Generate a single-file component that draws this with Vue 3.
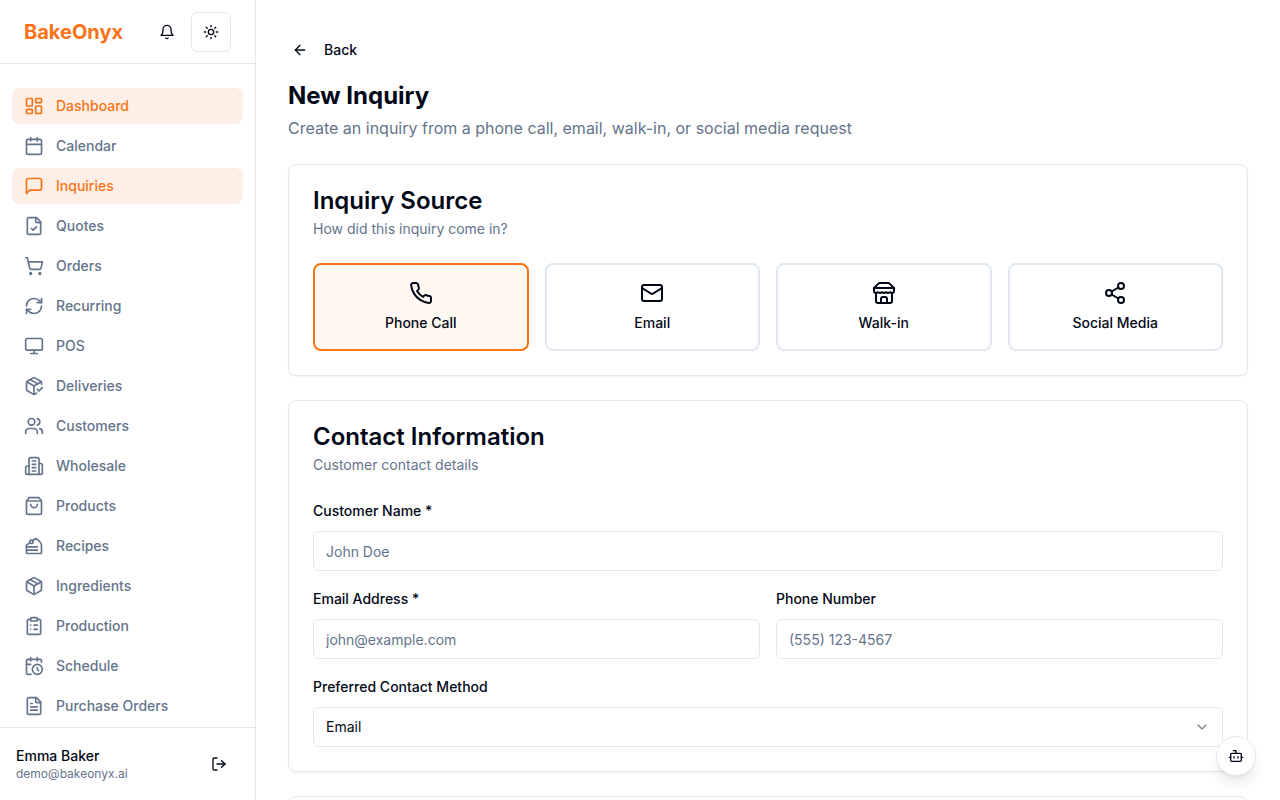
<template>
  <div class="layout">
    <aside class="sidebar">
      <div class="sidebar-header">
        <a href="#" class="logo">BakeOnyx</a>
        <div class="header-actions">
          <button type="button" class="icon-btn" aria-label="Notifications">
            <svg class="icon icon-sm" viewBox="0 0 24 24" v-html="icons.bell"></svg>
          </button>
          <button type="button" class="icon-btn outlined" aria-label="Toggle theme">
            <svg class="icon icon-sm" viewBox="0 0 24 24" v-html="icons.sun"></svg>
          </button>
        </div>
      </div>

      <nav class="nav">
        <a
          v-for="item in navItems"
          :key="item.label"
          href="#"
          class="nav-item"
          :class="{ active: item.active }"
        >
          <svg class="icon icon-md" viewBox="0 0 24 24" v-html="icons[item.icon]"></svg>
          {{ item.label }}
        </a>
      </nav>

      <div class="sidebar-footer">
        <div class="user">
          <p class="user-name">Emma Baker</p>
          <p class="user-email">demo@bakeonyx.ai</p>
        </div>
        <button type="button" class="icon-btn" aria-label="Log out">
          <svg class="icon icon-sm" viewBox="0 0 24 24" v-html="icons.logout"></svg>
        </button>
      </div>
    </aside>

    <main class="main">
      <button type="button" class="back">
        <svg class="icon icon-sm" viewBox="0 0 24 24" v-html="icons.arrowLeft"></svg>
        Back
      </button>

      <header class="page-header">
        <h1>New Inquiry</h1>
        <p>Create an inquiry from a phone call, email, walk-in, or social media request</p>
      </header>

      <form class="cards" @submit.prevent>
        <!-- Source -->
        <section class="card">
          <h2>Inquiry Source</h2>
          <p class="card-desc">How did this inquiry come in?</p>
          <div class="sources" role="radiogroup" aria-label="Inquiry Source">
            <label
              v-for="option in sources"
              :key="option.value"
              class="source"
              :class="{ selected: source === option.value }"
            >
              <input type="radio" name="source" :value="option.value" v-model="source" />
              <svg class="icon icon-lg" viewBox="0 0 24 24" v-html="icons[option.value]"></svg>
              <span>{{ option.label }}</span>
            </label>
          </div>
        </section>

        <!-- Contact -->
        <section class="card">
          <h2>Contact Information</h2>
          <p class="card-desc">Customer contact details</p>
          <div class="fields">
            <div class="field wide">
              <label for="name">Customer Name *</label>
              <input id="name" type="text" v-model="form.name" placeholder="John Doe" />
            </div>
            <div class="field">
              <label for="email">Email Address *</label>
              <input id="email" type="email" v-model="form.email" placeholder="john@example.com" />
            </div>
            <div class="field">
              <label for="phone">Phone Number</label>
              <input id="phone" type="tel" v-model="form.phone" placeholder="(555) 123-4567" />
            </div>
            <div class="field wide">
              <label for="method">Preferred Contact Method</label>
              <div class="select">
                <select id="method" v-model="form.method">
                  <option value="email">Email</option>
                </select>
                <svg class="icon icon-sm chevron" viewBox="0 0 24 24" v-html="icons.chevronDown"></svg>
              </div>
            </div>
          </div>
        </section>

        <section class="card"></section>
      </form>
    </main>

    <button type="button" class="assistant" aria-label="Assistant">
      <svg class="icon icon-sm" viewBox="0 0 24 24" v-html="icons.bot"></svg>
    </button>
  </div>
</template>

<script setup>
import { reactive, ref } from 'vue'

const source = ref('phone')

const form = reactive({
  name: '',
  email: '',
  phone: '',
  method: 'email',
})

const sources = [
  { value: 'phone', label: 'Phone Call' },
  { value: 'mail', label: 'Email' },
  { value: 'store', label: 'Walk-in' },
  { value: 'share', label: 'Social Media' },
]

const navItems = [
  { label: 'Dashboard', icon: 'dashboard', active: true },
  { label: 'Calendar', icon: 'calendar' },
  { label: 'Inquiries', icon: 'message', active: true },
  { label: 'Quotes', icon: 'fileCheck' },
  { label: 'Orders', icon: 'cart' },
  { label: 'Recurring', icon: 'refresh' },
  { label: 'POS', icon: 'monitor' },
  { label: 'Deliveries', icon: 'packageCheck' },
  { label: 'Customers', icon: 'users' },
  { label: 'Wholesale', icon: 'building' },
  { label: 'Products', icon: 'bag' },
  { label: 'Recipes', icon: 'cake' },
  { label: 'Ingredients', icon: 'package' },
  { label: 'Production', icon: 'clipboard' },
  { label: 'Schedule', icon: 'calendarClock' },
  { label: 'Purchase Orders', icon: 'fileText' },
]

// 24x24 stroke icons
const icons = {
  bell: '<path d="M10.3 21a1.94 1.94 0 0 0 3.4 0"/><path d="M6 8a6 6 0 0 1 12 0c0 7 3 9 3 9H3s3-2 3-9"/>',
  sun: '<circle cx="12" cy="12" r="4"/><path d="M12 2v2M12 20v2M4.93 4.93l1.41 1.41M17.66 17.66l1.41 1.41M2 12h2M20 12h2M6.34 17.66l-1.41 1.41M19.07 4.93l-1.41 1.41"/>',
  logout: '<path d="M9 21H5a2 2 0 0 1-2-2V5a2 2 0 0 1 2-2h4"/><path d="m16 17 5-5-5-5"/><path d="M21 12H9"/>',
  arrowLeft: '<path d="m12 19-7-7 7-7"/><path d="M19 12H5"/>',
  chevronDown: '<path d="m6 9 6 6 6-6"/>',
  bot: '<path d="M12 8V4H8"/><rect width="16" height="12" x="4" y="8" rx="2"/><path d="M2 14h2M20 14h2M15 13v2M9 13v2"/>',
  phone: '<path d="M22 16.92v3a2 2 0 0 1-2.18 2 19.79 19.79 0 0 1-8.63-3.07 19.5 19.5 0 0 1-6-6 19.79 19.79 0 0 1-3.07-8.67A2 2 0 0 1 4.11 2h3a2 2 0 0 1 2 1.72 12.84 12.84 0 0 0 .7 2.81 2 2 0 0 1-.45 2.11L8.09 9.91a16 16 0 0 0 6 6l1.27-1.27a2 2 0 0 1 2.11-.45 12.84 12.84 0 0 0 2.81.7A2 2 0 0 1 22 16.92z"/>',
  mail: '<rect width="20" height="16" x="2" y="4" rx="2"/><path d="m22 7-8.97 5.7a1.94 1.94 0 0 1-2.06 0L2 7"/>',
  store: '<path d="m2 7 4.41-4.41A2 2 0 0 1 7.83 2h8.34a2 2 0 0 1 1.42.59L22 7"/><path d="M4 12v8a2 2 0 0 0 2 2h12a2 2 0 0 0 2-2v-8"/><path d="M15 22v-4a2 2 0 0 0-2-2h-2a2 2 0 0 0-2 2v4"/><path d="M2 7h20"/><path d="M22 7v3a2 2 0 0 1-2 2a2.7 2.7 0 0 1-1.59-.63.7.7 0 0 0-.82 0A2.7 2.7 0 0 1 16 12a2.7 2.7 0 0 1-1.59-.63.7.7 0 0 0-.82 0A2.7 2.7 0 0 1 12 12a2.7 2.7 0 0 1-1.59-.63.7.7 0 0 0-.82 0A2.7 2.7 0 0 1 8 12a2.7 2.7 0 0 1-1.59-.63.7.7 0 0 0-.82 0A2.7 2.7 0 0 1 4 12a2 2 0 0 1-2-2V7"/>',
  share: '<circle cx="18" cy="5" r="3"/><circle cx="6" cy="12" r="3"/><circle cx="18" cy="19" r="3"/><path d="m8.59 13.51 6.83 3.98M15.41 6.51l-6.82 3.98"/>',
  dashboard: '<rect width="7" height="9" x="3" y="3" rx="1"/><rect width="7" height="5" x="14" y="3" rx="1"/><rect width="7" height="9" x="14" y="12" rx="1"/><rect width="7" height="5" x="3" y="16" rx="1"/>',
  calendar: '<path d="M8 2v4M16 2v4"/><rect width="18" height="18" x="3" y="4" rx="2"/><path d="M3 10h18"/>',
  message: '<path d="M21 15a2 2 0 0 1-2 2H7l-4 4V5a2 2 0 0 1 2-2h14a2 2 0 0 1 2 2z"/>',
  fileCheck: '<path d="M15 2H6a2 2 0 0 0-2 2v16a2 2 0 0 0 2 2h12a2 2 0 0 0 2-2V7Z"/><path d="M14 2v4a2 2 0 0 0 2 2h4"/><path d="m9 15 2 2 4-4"/>',
  cart: '<circle cx="8" cy="21" r="1"/><circle cx="19" cy="21" r="1"/><path d="M2.05 2.05h2l2.66 12.42a2 2 0 0 0 2 1.58h9.78a2 2 0 0 0 1.95-1.57l1.65-7.43H5.12"/>',
  refresh: '<path d="M3 12a9 9 0 0 1 9-9 9.75 9.75 0 0 1 6.74 2.74L21 8"/><path d="M21 3v5h-5"/><path d="M21 12a9 9 0 0 1-9 9 9.75 9.75 0 0 1-6.74-2.74L3 16"/><path d="M8 16H3v5"/>',
  monitor: '<rect width="20" height="14" x="2" y="3" rx="2"/><path d="M8 21h8M12 17v4"/>',
  packageCheck: '<path d="m16 16 2 2 4-4"/><path d="M21 10V8a2 2 0 0 0-1-1.73l-7-4a2 2 0 0 0-2 0l-7 4A2 2 0 0 0 3 8v8a2 2 0 0 0 1 1.73l7 4a2 2 0 0 0 2 0l2-1.14"/><path d="m7.5 4.27 9 5.15"/><path d="M3.29 7 12 12l8.71-5"/><path d="M12 22V12"/>',
  users: '<path d="M16 21v-2a4 4 0 0 0-4-4H6a4 4 0 0 0-4 4v2"/><circle cx="9" cy="7" r="4"/><path d="M22 21v-2a4 4 0 0 0-3-3.87"/><path d="M16 3.13a4 4 0 0 1 0 7.75"/>',
  building: '<path d="M6 22V4a2 2 0 0 1 2-2h8a2 2 0 0 1 2 2v18Z"/><path d="M6 12H4a2 2 0 0 0-2 2v6a2 2 0 0 0 2 2h2"/><path d="M18 9h2a2 2 0 0 1 2 2v9a2 2 0 0 1-2 2h-2"/><path d="M10 6h4M10 10h4M10 14h4M10 18h4"/>',
  bag: '<path d="M6 2 3 6v14a2 2 0 0 0 2 2h14a2 2 0 0 0 2-2V6l-3-4Z"/><path d="M3 6h18"/><path d="M16 10a4 4 0 0 1-8 0"/>',
  cake: '<circle cx="9" cy="7" r="2"/><path d="M7.2 7.9 3 11v9c0 .6.4 1 1 1h16c.6 0 1-.4 1-1v-9c0-2-3-6-7-8l-3.6 2.6"/><path d="M16 13H3M16 17H3"/>',
  package: '<path d="M11 21.73a2 2 0 0 0 2 0l7-4A2 2 0 0 0 21 16V8a2 2 0 0 0-1-1.73l-7-4a2 2 0 0 0-2 0l-7 4A2 2 0 0 0 3 8v8a2 2 0 0 0 1 1.73z"/><path d="M12 22V12"/><path d="M3.29 7 12 12l8.71-5"/><path d="m7.5 4.27 9 5.15"/>',
  clipboard: '<rect width="8" height="4" x="8" y="2" rx="1"/><path d="M16 4h2a2 2 0 0 1 2 2v14a2 2 0 0 1-2 2H6a2 2 0 0 1-2-2V6a2 2 0 0 1 2-2h2"/><path d="M12 11h4M12 16h4M8 11h.01M8 16h.01"/>',
  calendarClock: '<path d="M21 7.5V6a2 2 0 0 0-2-2H5a2 2 0 0 0-2 2v14a2 2 0 0 0 2 2h3.5"/><path d="M16 2v4M8 2v4M3 10h5"/><path d="M17.5 17.5 16 16.3V14"/><circle cx="16" cy="16" r="6"/>',
  fileText: '<path d="M15 2H6a2 2 0 0 0-2 2v16a2 2 0 0 0 2 2h12a2 2 0 0 0 2-2V7Z"/><path d="M14 2v4a2 2 0 0 0 2 2h4"/><path d="M10 9H8M16 13H8M16 17H8"/>',
}
</script>

<style>
body {
  background: #fff;
}
</style>

<style scoped>
*,
*::before,
*::after {
  box-sizing: border-box;
}

.layout {
  display: flex;
  align-items: flex-start;
  color: #020817;
  font-family: Inter, "Liberation Sans", sans-serif;
  font-size: 16px;
  line-height: 24px;
}

h1,
h2,
p {
  margin: 0;
}

a {
  color: inherit;
  text-decoration: none;
}

button,
input,
select {
  color: inherit;
  font: inherit;
}

button {
  padding: 0;
  border: 0;
  background: #fff;
  cursor: pointer;
}

.icon {
  flex: none;
  fill: none;
  stroke: currentColor;
  stroke-width: 2;
  stroke-linecap: round;
  stroke-linejoin: round;
}

.icon-sm {
  width: 16px;
  height: 16px;
}

.icon-md {
  width: 20px;
  height: 20px;
}

.icon-lg {
  width: 24px;
  height: 24px;
}

/* Sidebar */
.sidebar {
  position: sticky;
  top: 0;
  display: flex;
  flex: none;
  flex-direction: column;
  width: 256px;
  height: 100vh;
  border-right: 1px solid #e2e8f0;
}

.sidebar-header {
  display: flex;
  flex: none;
  align-items: center;
  justify-content: space-between;
  height: 64px;
  padding: 0 24px;
  border-bottom: 1px solid #e2e8f0;
}

.logo {
  color: #f97316;
  font-size: 20px;
  font-weight: 700;
  line-height: 28px;
}

.header-actions {
  display: flex;
  gap: 4px;
}

.icon-btn {
  display: flex;
  align-items: center;
  justify-content: center;
  width: 40px;
  height: 40px;
  border-radius: 6px;
}

.icon-btn.outlined {
  border: 1px solid #e2e8f0;
}

.nav {
  display: flex;
  flex: 1;
  flex-direction: column;
  gap: 4px;
  min-height: 0;
  padding: 24px 12px;
  overflow-y: auto;
  scrollbar-width: none;
}

.nav-item {
  display: flex;
  flex: none;
  align-items: center;
  gap: 12px;
  padding: 8px 12px;
  border-radius: 8px;
  color: #64748b;
  font-size: 14px;
  font-weight: 500;
  line-height: 20px;
}

.nav-item.active {
  background: #feefe6;
  color: #f97316;
}

.sidebar-footer {
  display: flex;
  flex: none;
  align-items: center;
  justify-content: space-between;
  padding: 16px;
  border-top: 1px solid #e2e8f0;
}

.user-name {
  font-size: 14px;
  font-weight: 500;
  line-height: 20px;
}

.user-email {
  color: #64748b;
  font-size: 12px;
  line-height: 16px;
}

/* Page */
.main {
  flex: 1;
  min-width: 0;
  padding: 32px;
}

.back {
  display: flex;
  align-items: center;
  gap: 16px;
  height: 36px;
  padding: 0 4px;
  border-radius: 6px;
  font-size: 14px;
  font-weight: 500;
}

.page-header {
  margin: 12px 0 24px;
}

.page-header h1 {
  font-size: 24px;
  font-weight: 700;
  line-height: 32px;
}

.page-header p {
  margin-top: 4px;
  color: #64748b;
}

.cards {
  display: flex;
  flex-direction: column;
  gap: 24px;
}

.card {
  padding: 24px;
  border: 1px solid #e2e8f0;
  border-radius: 8px;
  background: #fff;
  box-shadow: 0 1px 2px rgba(0, 0, 0, 0.05);
}

.card h2 {
  font-size: 24px;
  font-weight: 600;
  line-height: 24px;
}

.card-desc {
  margin: 6px 0 24px;
  color: #64748b;
  font-size: 14px;
  line-height: 20px;
}

/* Source picker */
.sources {
  display: grid;
  grid-template-columns: repeat(4, 1fr);
  gap: 16px;
}

.source {
  position: relative;
  display: flex;
  flex-direction: column;
  align-items: center;
  gap: 8px;
  padding: 16px;
  border: 2px solid #e2e8f0;
  border-radius: 8px;
  font-size: 14px;
  font-weight: 500;
  line-height: 20px;
  cursor: pointer;
}

.source.selected {
  border-color: #f97316;
  background: #fff8f3;
}

.source input {
  position: absolute;
  inset: 0;
  margin: 0;
  opacity: 0;
}

/* Form fields */
.fields {
  display: grid;
  grid-template-columns: repeat(2, 1fr);
  gap: 16px;
}

.field {
  display: flex;
  flex-direction: column;
  gap: 8px;
  min-width: 0;
}

.field.wide {
  grid-column: 1 / -1;
}

.field label {
  font-size: 14px;
  font-weight: 500;
}

.field input,
.field select {
  width: 100%;
  height: 40px;
  padding: 8px 12px;
  border: 1px solid #e2e8f0;
  border-radius: 6px;
  background: #fff;
  font-size: 14px;
  line-height: 20px;
  appearance: none;
}

.field input::placeholder {
  color: #64748b;
  opacity: 1;
}

.select {
  display: grid;
  align-items: center;
}

.select > * {
  grid-area: 1 / 1;
}

.chevron {
  justify-self: end;
  margin-right: 13px;
  opacity: 0.5;
  pointer-events: none;
}

.assistant {
  position: fixed;
  right: 24px;
  bottom: 24px;
  display: flex;
  align-items: center;
  justify-content: center;
  width: 40px;
  height: 40px;
  border: 1px solid #e2e8f0;
  border-radius: 50%;
  box-shadow: 0 10px 15px -3px rgba(0, 0, 0, 0.1), 0 4px 6px -4px rgba(0, 0, 0, 0.1);
}
</style>
